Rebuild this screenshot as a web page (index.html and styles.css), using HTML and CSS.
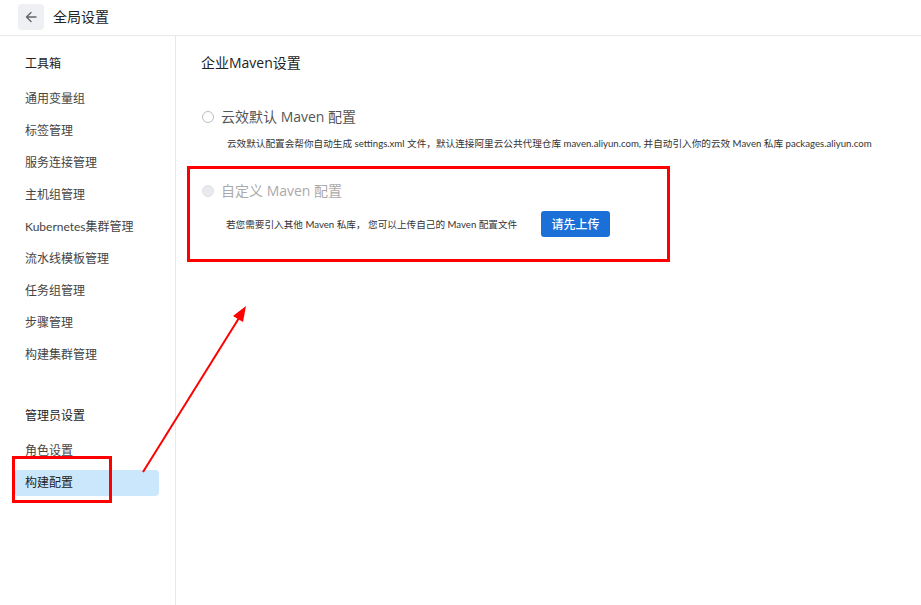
FILE: index.html
```html
<!DOCTYPE html>
<html lang="zh">
<head>
<meta charset="utf-8">
<link rel="stylesheet" href="styles.css">
</head>
<body>
<header class="header">
  <button class="back" aria-label="返回">
    <svg width="14" height="14" viewBox="0 0 14 14"><path d="M12 7H2.5M7 2.5L2.5 7 7 11.5" fill="none" stroke="#666" stroke-width="1.4" stroke-linecap="round" stroke-linejoin="round"/></svg>
  </button>
  <h1 class="page-title">全局设置</h1>
</header>
<div class="main">
  <nav class="sidebar">
    <div class="group-title">工具箱</div>
    <a class="nav-item">通用变量组</a>
    <a class="nav-item">标签管理</a>
    <a class="nav-item">服务连接管理</a>
    <a class="nav-item">主机组管理</a>
    <a class="nav-item">Kubernetes集群管理</a>
    <a class="nav-item">流水线模板管理</a>
    <a class="nav-item">任务组管理</a>
    <a class="nav-item">步骤管理</a>
    <a class="nav-item">构建集群管理</a>
    <div class="group-title group-gap">管理员设置</div>
    <a class="nav-item">角色设置</a>
    <a class="nav-item active">构建配置</a>
  </nav>
  <section class="content">
    <h2 class="section-title">企业Maven设置</h2>
    <label class="radio-row first">
      <span class="radio"></span>
      <span class="radio-label">云效默认 Maven 配置</span>
    </label>
    <p class="desc">云效默认配置会帮你自动生成 settings.xml 文件，默认连接阿里云公共代理仓库 maven.aliyun.com, 并自动引入你的云效 Maven 私库 packages.aliyun.com</p>
    <label class="radio-row second disabled">
      <span class="radio"></span>
      <span class="radio-label">自定义 Maven 配置</span>
    </label>
    <div class="upload-row">
      <p class="desc inline">若您需要引入其他 Maven 私库， 您可以上传自己的 Maven 配置文件</p>
      <button class="btn-primary">请先上传</button>
    </div>
  </section>
</div>
<div class="mark mark-nav"></div>
<div class="mark mark-option"></div>
<svg class="arrow" width="921" height="605" viewBox="0 0 921 605">
  <line x1="143" y1="472" x2="239" y2="318" stroke="#f00" stroke-width="2"/>
  <polygon points="246,306 233,316 243,322" fill="#f00"/>
</svg>
</body>
</html>
```
FILE: styles.css
```css
* { box-sizing: border-box; }
html, body { margin: 0; padding: 0; background: #fff; }
body {
  font-family: "Open Sans", "Noto Sans CJK SC", sans-serif;
  color: #333;
  width: 921px;
  height: 605px;
  overflow: hidden;
  position: relative;
}
.header {
  height: 36px;
  border-bottom: 1px solid #e9eaec;
  display: flex;
  align-items: center;
  padding-left: 18px;
  gap: 9px;
}
.back {
  width: 26px;
  height: 26px;
  border: none;
  border-radius: 4px;
  background: #eef0f3;
  display: flex;
  align-items: center;
  justify-content: center;
  padding: 0;
  margin-top: -1px;
}
.page-title {
  margin: 0;
  font-size: 14px;
  font-weight: 400;
  color: #222;
  line-height: 20px;
  margin-top: -1px;
}
.main {
  display: flex;
  height: 569px;
}
.sidebar {
  width: 176px;
  border-right: 1px solid #e8e8e8;
  display: flex;
  flex-direction: column;
  padding-top: 12px;
  font-family: "Lato", "Noto Sans CJK SC", sans-serif;
}
.group-title {
  height: 32px;
  line-height: 32px;
  padding-left: 25px;
  font-size: 12px;
  color: #222;
  margin-bottom: 3px;
}
.group-gap { margin-top: 29px; }
.nav-item {
  height: 26px;
  line-height: 26px;
  margin: 3px 16px 3px 14px;
  padding-left: 11px;
  font-size: 12px;
  color: #444;
  border-radius: 4px;
}
.nav-item.active {
  background: #cbe7fb;
  color: #222;
}
.content {
  flex: 1;
  padding: 17px 0 0 25px;
}
.section-title {
  margin: 0;
  font-size: 14px;
  font-weight: 400;
  line-height: 20px;
  color: #222;
}
.radio-row {
  display: flex;
  align-items: center;
  height: 20px;
  gap: 7px;
}
.radio-row.first { margin-top: 34px; }
.radio-row.second { margin-top: 30px; }
.radio {
  width: 12px;
  height: 12px;
  border-radius: 50%;
  border: 1px solid #b9bcc2;
  background: #fff;
  margin-left: 1px;
}
.radio-label {
  font-size: 14px;
  color: #555;
  line-height: 20px;
}
.disabled .radio {
  background: #e8eaee;
  border-color: #dfe1e5;
}
.disabled .radio-label { color: #aaa; }
.desc {
  margin: 8px 0 0 26px;
  font-family: "Lato", "Noto Sans CJK SC", sans-serif;
  font-size: 9.65px;
  line-height: 16px;
  color: #333;
  white-space: nowrap;
}
.upload-row {
  display: flex;
  align-items: center;
  margin-top: 10px;
  height: 26px;
}
.desc.inline { margin: 0 0 0 25px; width: 315px; }
.btn-primary {
  width: 69px;
  height: 26px;
  border: none;
  border-radius: 3px;
  background: #1b70d8;
  color: #fff;
  font-family: "Open Sans", "Noto Sans CJK SC", sans-serif;
  font-size: 12px;
  font-weight: 500;
  padding: 0;
}
.mark {
  position: absolute;
  border: 3px solid #f00;
}
.mark-nav { left: 12px; top: 456px; width: 100px; height: 47px; }
.mark-option { left: 187px; top: 166px; width: 483px; height: 96px; }
.arrow { position: absolute; left: 0; top: 0; pointer-events: none; }
```
